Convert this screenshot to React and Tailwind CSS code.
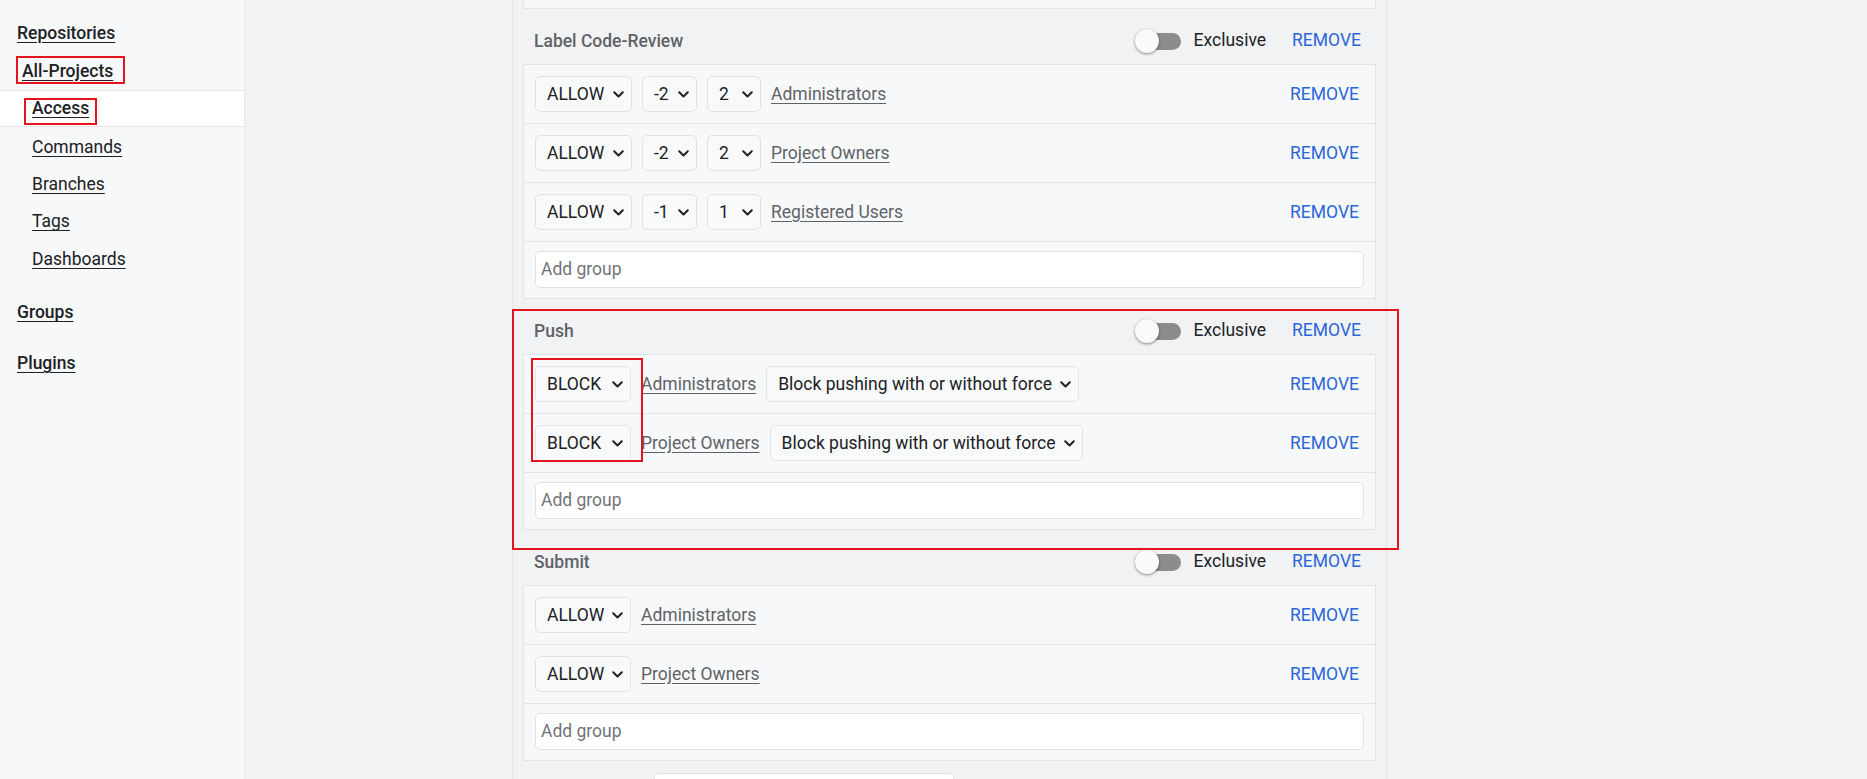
import React from "react";

const Chevron = () => (
  <svg width="11" height="7" viewBox="0 0 11 7" className="shrink-0">
    <path d="M1.2 1.2l4.3 4.3 4.3-4.3" fill="none" stroke="#202124" strokeWidth="2" strokeLinecap="round" strokeLinejoin="round" />
  </svg>
);

function Sel({ w, children }) {
  return (
    <div className={`flex items-center justify-between h-[36px] pl-[11px] pr-[7px] rounded-[5px] border border-[#e1e2e4] bg-[#f8f9fa] text-[#202124] ${w}`}>
      <span>{children}</span>
      <Chevron />
    </div>
  );
}

function GroupLink({ children }) {
  return <a className="underline text-[#5f6368] underline-offset-[3px] decoration-[#5f6368]">{children}</a>;
}

function RuleRow({ children }) {
  return (
    <div className="h-[59px] border-b border-[#e3e4e6] flex items-center pl-[11px] pr-[16px]">
      <div className="flex items-center gap-[10px]">{children}</div>
      <a className="ml-auto text-[#2a66d9]">REMOVE</a>
    </div>
  );
}

function AddGroup() {
  return (
    <div className="pt-[9px] pb-[10px] px-[11px]">
      <div className="h-[37px] bg-white border border-[#dfe1e5] rounded-[5px] flex items-center pl-[5px] text-[#70757a]">
        Add group
      </div>
    </div>
  );
}

function Toggle() {
  return (
    <div className="relative w-[46px] h-[24px]">
      <div className="absolute left-[10px] right-0 top-[4px] h-[17px] rounded-full bg-[#8c8c8c]" />
      <div className="absolute left-0 top-0 w-[24px] h-[24px] rounded-full bg-[#fafafa] shadow-[0_1px_3px_rgba(0,0,0,0.45)]" />
    </div>
  );
}

function Section({ title, children }) {
  return (
    <div>
      <div className="h-[55px] pt-[8px] flex items-center pl-[11px] pr-[15px]">
        <span className="font-medium text-[#5f6368] translate-y-[1px]">{title}</span>
        <div className="ml-auto flex items-center">
          <Toggle />
          <span className="ml-[13px] text-[#202124]">Exclusive</span>
          <a className="ml-[26px] text-[#2a66d9]">REMOVE</a>
        </div>
      </div>
      <div className="border border-[#e3e4e6] bg-[#f7f8fa]">
        {children}
        <AddGroup />
      </div>
    </div>
  );
}

export default function App() {
  return (
    <div className="relative flex h-[779px] overflow-hidden bg-[#f1f2f4] font-['Roboto',sans-serif] text-[17.5px] leading-[21px] text-[#202124]">
      {/* Sidebar */}
      <nav className="w-[245px] shrink-0 bg-[#f7f8fa] border-r border-[#e4e5e7] pt-[14px]">
        <div className="h-[38px] flex items-center px-[17px]">
          <a className="underline font-medium underline-offset-[3px]">Repositories</a>
        </div>
        <div className="h-[38px] flex items-center pl-[22px]">
          <a className="underline font-medium underline-offset-[3px]">All-Projects</a>
        </div>
        <div className="h-[37px] flex items-center pl-[32px] bg-white border-y border-[#e4e5e7]">
          <a className="underline font-medium underline-offset-[3px]">Access</a>
        </div>
        {["Commands", "Branches", "Tags", "Dashboards"].map((t) => (
          <div key={t} className="h-[37.4px] flex items-center pl-[32px] pt-[3px]">
            <a className="underline underline-offset-[3px]">{t}</a>
          </div>
        ))}
        <div className="h-[38px] mt-[17px] flex items-center px-[17px]">
          <a className="underline font-medium underline-offset-[3px]">Groups</a>
        </div>
        <div className="h-[38px] mt-[13px] flex items-center px-[17px]">
          <a className="underline font-medium underline-offset-[3px]">Plugins</a>
        </div>
      </nav>

      {/* Main panel */}
      <main className="ml-[267px] w-[875px] shrink-0 border-x border-[#e4e5e7] px-[10px]">
        <div className="h-[9px] border-x border-b border-[#e3e4e6] bg-[#f7f8fa]" />

        <Section title="Label Code-Review">
          <RuleRow>
            <Sel w="w-[97px]">ALLOW</Sel>
            <Sel w="w-[55px]">-2</Sel>
            <Sel w="w-[54px]">2</Sel>
            <GroupLink>Administrators</GroupLink>
          </RuleRow>
          <RuleRow>
            <Sel w="w-[97px]">ALLOW</Sel>
            <Sel w="w-[55px]">-2</Sel>
            <Sel w="w-[54px]">2</Sel>
            <GroupLink>Project Owners</GroupLink>
          </RuleRow>
          <RuleRow>
            <Sel w="w-[97px]">ALLOW</Sel>
            <Sel w="w-[55px]">-1</Sel>
            <Sel w="w-[54px]">1</Sel>
            <GroupLink>Registered Users</GroupLink>
          </RuleRow>
        </Section>

        <Section title="Push">
          <RuleRow>
            <Sel w="w-[96px]">BLOCK</Sel>
            <GroupLink>Administrators</GroupLink>
            <Sel w="w-[313px]">Block pushing with or without force</Sel>
          </RuleRow>
          <RuleRow>
            <Sel w="w-[96px]">BLOCK</Sel>
            <GroupLink>Project Owners</GroupLink>
            <Sel w="w-[313px]">Block pushing with or without force</Sel>
          </RuleRow>
        </Section>

        <Section title="Submit">
          <RuleRow>
            <Sel w="w-[96px]">ALLOW</Sel>
            <GroupLink>Administrators</GroupLink>
          </RuleRow>
          <RuleRow>
            <Sel w="w-[96px]">ALLOW</Sel>
            <GroupLink>Project Owners</GroupLink>
          </RuleRow>
        </Section>

        <div className="mt-[12px] ml-[131px] w-[300px] h-[40px] bg-white border border-[#dfe1e5] rounded-[5px]" />
      </main>

      {/* Annotation boxes */}
      <div className="absolute left-[16px] top-[56px] w-[109px] h-[28px] border-2 border-[#e3141c]" />
      <div className="absolute left-[24px] top-[98px] w-[73px] h-[27px] border-2 border-[#e3141c]" />
      <div className="absolute left-[512px] top-[309px] w-[887px] h-[241px] border-2 border-[#e3141c]" />
      <div className="absolute left-[531px] top-[358px] w-[112px] h-[104px] border-2 border-[#e3141c]" />
    </div>
  );
}
